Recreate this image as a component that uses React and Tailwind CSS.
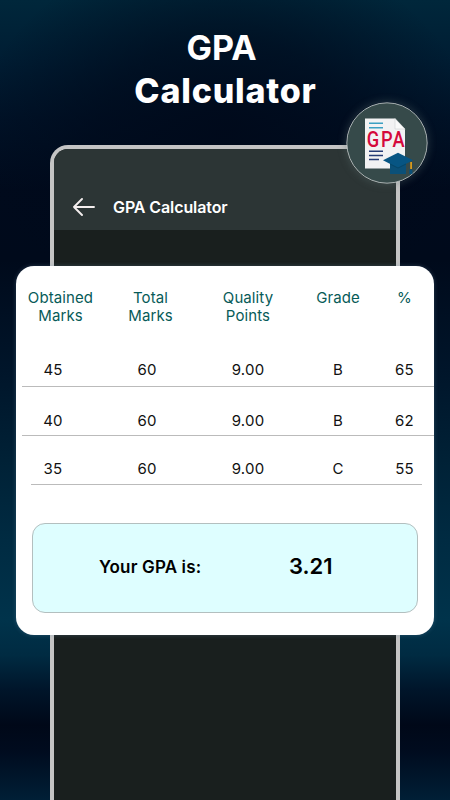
const columns = [
  ['Obtained', 'Marks'],
  ['Total', 'Marks'],
  ['Quality', 'Points'],
  ['Grade'],
  ['%'],
];

const rows = [
  { cells: ['45', '60', '9.00', 'B', '65'], height: 'h-[26px]', rule: 'ml-[6px]' },
  { cells: ['40', '60', '9.00', 'B', '62'], height: 'h-[49px] pt-[25px]', rule: 'ml-[6px]' },
  { cells: ['35', '60', '9.00', 'C', '55'], height: 'h-[49px] pt-[24px]', rule: 'ml-[15px] mr-[12px]' },
];

function Background() {
  return (
    <div className="absolute inset-0 bg-[linear-gradient(to_bottom,#00273b_0px,#001d33_60px,#001227_120px,#000a1c_190px,#000a1b_260px,#00152a_370px,#002136_460px,#002b42_540px,#00334b_620px,#002b42_655px,#00152a_690px,#000818_725px,#000b1e_750px,#001f36_800px)]">
      <div className="h-[270px] bg-[radial-gradient(ellipse_250px_190px_at_50%_50%,rgba(0,9,26,0.9),rgba(0,9,26,0.6)_50%,rgba(0,9,26,0))]" />
    </div>
  );
}

function GpaBadge() {
  return (
    <div className="absolute left-[346px] top-[102px] z-20 h-[82px] w-[82px] rounded-full shadow-[0_0_8px_rgba(90,110,110,0.45)]">
      <svg viewBox="0 0 82 82" className="h-full w-full">
        <circle cx="41" cy="41" r="40.2" fill="#364a4a" stroke="#b9c0c0" strokeWidth="0.9" />
        <path d="M19 16.5h30l10 11v39H19z" fill="#f2f2f3" />
        <path d="M49 16.5v10.500h10z" fill="#fafafa" stroke="#cfd1d3" strokeWidth="0.6" />
        <path d="M23 21.300h14M23 25.700h14" stroke="#3b9fc2" strokeWidth="1.5" />
        <path d="M23 49.300h14M23 53.500h14M23 57.500h10" stroke="#263c76" strokeWidth="1.5" />
        <g transform="scale(0.85 1)" fill="#d5093c" fontFamily="Roboto, sans-serif" fontSize="21.5" fontWeight="500">
          <text x="24.5" y="45">G</text>
          <text x="41.2" y="45">P</text>
          <text x="54.8" y="45">A</text>
        </g>
        <path d="M44 59l8 4 8-4v13H44z" fill="#0b5078" />
        <path d="M37 58.300L52 50.800l15 7.500L52 66z" fill="#075583" />
        <path d="M44 62l8 4 8-4" fill="none" stroke="#05405f" strokeWidth="0.7" />
        <path d="M64.200 60h1.800v7h-1.800z" fill="#d99a1c" />
        <path d="M63.200 67.500h3.200v4.500h-3.200z" fill="#0b5078" />
      </svg>
    </div>
  );
}

function AppBar() {
  return (
    <header className="flex h-[81px] items-end rounded-t-[14px] bg-[#2c3535] pb-[13px] pl-[19px] text-white">
      <svg className="h-[20px] w-[22px]" viewBox="0 0 22 20" fill="none" stroke="#f4eeee" strokeWidth="1.9" strokeLinecap="round" strokeLinejoin="round">
        <path d="M21 10H1M9 2L1 10l8 8" />
      </svg>
      <h2 className="ml-[18px] text-[16px] font-semibold leading-5 tracking-[-0.1px]">GPA Calculator</h2>
    </header>
  );
}

function TableRow({ cells, height, rule }) {
  return (
    <>
      <div className={`grid grid-cols-[89px_91px_104px_76px_57px] text-center text-[15px] leading-[18px] tracking-[0.2px] text-[#111] ${height}`}>
        <span className="pr-[15px]">{cells[0]}</span>
        <span className="pr-[7px]">{cells[1]}</span>
        <span>{cells[2]}</span>
        <span>{cells[3]}</span>
        <span>{cells[4]}</span>
      </div>
      <div className={`-mt-px h-px bg-[#bbbbbb] ${rule}`} />
    </>
  );
}

function ResultsCard() {
  return (
    <section className="-mx-[38px] mt-9 h-[369px] rounded-[18px] bg-white pt-[23px] shadow-[0_0_4px_rgba(110,140,170,0.35)]">
      <div className="grid h-[72px] grid-cols-[89px_91px_104px_76px_57px] text-center text-[15px] leading-[18px] tracking-[0.1px] text-[#075b58]">
        {columns.map((lines, i) => (
          <div key={i}>
            {lines.map((line) => (
              <div key={line}>{line}</div>
            ))}
          </div>
        ))}
      </div>

      {rows.map((row, i) => (
        <TableRow key={i} {...row} />
      ))}

      <div className="mx-4 mt-[38px] flex h-[90px] rounded-[13px] border border-[#b3bfbf] bg-[#defeff] text-black">
        <span className="ml-[66px] mt-[32px] w-[190px] text-[17px] font-semibold leading-[22px] tracking-[0.15px]">Your GPA is:</span>
        <span className="mt-[28px] text-[22px] font-semibold leading-[28px]">3.21</span>
      </div>
    </section>
  );
}

export default function App() {
  return (
    <main className="relative h-[800px] w-[450px] overflow-hidden font-['Inter',sans-serif]">
      <Background />
      <div className="relative flex h-full flex-col">
        <h1 className="h-[145px] shrink-0 pt-[26px] text-center text-[34px] font-bold leading-[43px] text-white">
          <span className="block pr-[7px]">GPA</span>
          <span className="block pl-px font-extrabold tracking-[0.8px]">Calculator</span>
        </h1>
        <div className="mx-[50px] h-[675px] shrink-0 rounded-t-[18px] border-4 border-b-0 border-[#c4c4c4] bg-[#191f1e]">
          <AppBar />
          <ResultsCard />
        </div>
      </div>
      <GpaBadge />
    </main>
  );
}
